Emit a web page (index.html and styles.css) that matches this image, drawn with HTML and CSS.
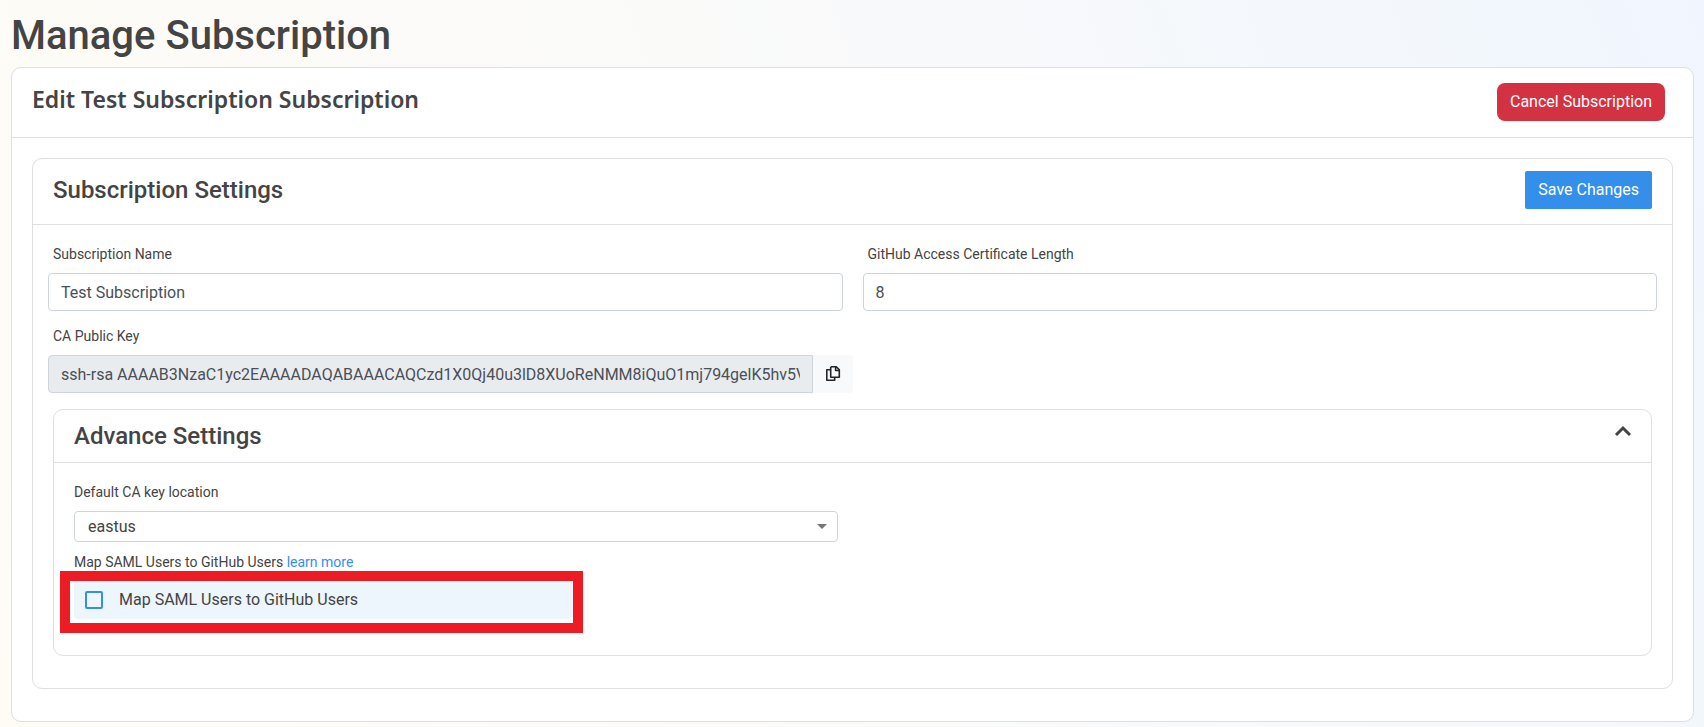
FILE: index.html
```html
<!DOCTYPE html>
<html lang="en">
<head>
<meta charset="utf-8">
<title>Manage Subscription</title>
<link rel="stylesheet" href="styles.css">
</head>
<body>
<main class="page">
  <h1 class="page-title">Manage Subscription</h1>
  <section class="card card-outer">
    <header class="card-header header-outer">
      <h2 class="card-title title-edit">Edit Test Subscription Subscription</h2>
      <button type="button" class="btn btn-danger">Cancel Subscription</button>
    </header>
    <form class="card card-settings">
      <header class="card-header header-settings">
        <h2 class="card-title">Subscription Settings</h2>
        <button type="button" class="btn btn-primary">Save Changes</button>
      </header>
      <div class="settings-body">
        <div class="field-row">
          <div class="field">
            <label class="label" for="sub-name">Subscription Name</label>
            <input class="control" id="sub-name" type="text" value="Test Subscription">
          </div>
          <div class="field">
            <label class="label" for="cert-length">GitHub Access Certificate Length</label>
            <input class="control" id="cert-length" type="text" value="8">
          </div>
        </div>
        <div class="field field-key">
          <label class="label" for="ca-key">CA Public Key</label>
          <div class="input-group">
            <input class="control control-readonly" id="ca-key" type="text" readonly value="ssh-rsa AAAAB3NzaC1yc2EAAAADAQABAAACAQCzd1X0Qj40u3lD8XUoReNMM8iQuO1mj794gelK5hv5VxQ2mT7">
            <button type="button" class="copy-btn" aria-label="Copy CA public key">
              <svg class="copy-icon" viewBox="0 0 16 18" aria-hidden="true">
                <path d="M6.5 1.8h4.8l3 3v7.4h-8.6v-9.6z M10.6 1.8v3.7h3.7 M5.7 4.8h-3.9v10.4h7.9v-3" fill="none" stroke="currentColor" stroke-width="1.6" stroke-linejoin="round"/>
              </svg>
            </button>
          </div>
        </div>
        <section class="card card-advance">
          <header class="card-header header-advance">
            <h2 class="card-title">Advance Settings</h2>
            <button type="button" class="collapse-btn" aria-label="Collapse advance settings">
              <svg class="chevron" viewBox="0 0 18 12" aria-hidden="true">
                <path d="M2 10l7-7 7 7" fill="none" stroke="currentColor" stroke-width="3"/>
              </svg>
            </button>
          </header>
          <div class="advance-body">
            <div class="location">
              <label class="label label-flush" for="location">Default CA key location</label>
              <div class="select-wrap">
                <select class="select" id="location"><option>eastus</option></select>
              </div>
            </div>
            <p class="map-note">Map SAML Users to GitHub Users <a class="link" href="#learn">learn more</a></p>
            <div class="map-option">
              <label class="check-label"><input class="check" type="checkbox">Map SAML Users to GitHub Users</label>
            </div>
          </div>
        </section>
      </div>
    </form>
  </section>
</main>
</body>
</html>
```
FILE: styles.css
```css
* { box-sizing: border-box; }

body {
  margin: 0;
  min-height: 100vh;
  background: linear-gradient(70deg, #fefcf5 0%, #fafafa 50%, #f2f7fd 90%, #f0f5ff 100%);
  color: #444;
  font: 400 16px/24px Roboto, sans-serif;
}

h1, h2, p { margin: 0; }
button, input, select { font: inherit; color: inherit; }

.page { padding: 12px 10px 4px 11px; }
.page-title { font-size: 40px; line-height: 48px; font-weight: 500; margin-bottom: 7px; }

.card { background: #fff; border: 1px solid #dedfe0; border-radius: 10px; }
.card-outer { padding-bottom: 32px; }
.card-header {
  display: flex;
  justify-content: space-between;
  align-items: flex-start;
  border-bottom: 1px solid #dedfe0;
  padding: 0 20px;
}
.card-title { font-size: 24px; line-height: 32px; font-weight: 500; }
.title-edit { font-family: "Noto Sans", sans-serif; font-size: 23px; font-weight: 600; }

.header-outer { padding: 15px 28px 16px 20px; }
.header-settings { padding: 12px 20px 15px; }
.header-settings .card-title { margin-top: 3px; }
.header-advance { padding: 10px 19px 10px 20px; }

.btn { border: 0; height: 38px; padding: 0 13px; color: #fff; cursor: pointer; }
.btn-danger { background: #d33242; border-radius: 8px; }
.btn-primary { background: #348feb; border-radius: 2px; }

.card-settings { margin: 20px 20px 0; padding-bottom: 32px; }
.settings-body { padding: 19px 15px 0; }
.field-row { display: grid; grid-template-columns: 1fr 1fr; gap: 20px; }
.label { display: block; padding-left: 5px; margin-bottom: 8px; font-size: 14px; line-height: 21px; }
.label-flush { padding-left: 0; }
.control {
  display: block;
  width: 100%;
  height: 38px;
  padding: 0 12px;
  border: 1px solid #ced4da;
  border-radius: 4px;
  background: #fff;
  color: #495057;
}
.field-key { width: 50%; margin-top: 15px; }
.input-group { display: flex; }
.control-readonly { flex: 1; min-width: 0; background: #e9ecef; border-radius: 4px 0 0 4px; }
.copy-btn {
  width: 40px;
  border: 0;
  border-radius: 0 4px 4px 0;
  background: #f8f9fa;
  color: #212529;
  padding: 0 12px;
}
.copy-icon { display: block; width: 16px; height: 18px; }

.card-advance { margin: 16px 5px 0; }
.collapse-btn { border: 0; background: none; padding: 5px 0 0; }
.chevron { display: block; width: 18px; height: 12px; }
.advance-body { padding: 19px 20px 36px; }
.location { width: calc(50% - 15px); }
.select-wrap { display: flex; align-items: center; position: relative; }
.select-wrap::after {
  content: "";
  position: absolute;
  right: 11px;
  border: 5px solid transparent;
  border-top-color: #757575;
  border-bottom: 0;
  pointer-events: none;
}
.select {
  appearance: none;
  width: 100%;
  height: 31px;
  padding: 0 13px;
  border: 1px solid #ced4da;
  border-radius: 4px;
  background: #fff;
}
.map-note { margin-top: 10px; font-size: 14px; line-height: 21px; }
.link { color: #348feb; text-decoration: none; }

.map-option { position: relative; width: calc(33.333% - 20px); margin-top: 8px; }
.map-option::after {
  content: "";
  position: absolute;
  inset: -10px -10px -14px -14px;
  border: 10px solid #ed1c24;
  pointer-events: none;
}
.check-label {
  display: flex;
  align-items: center;
  gap: 16px;
  height: 38px;
  padding-left: 11px;
  border-radius: 4px;
  background: #edf5fd;
}
.check {
  appearance: none;
  width: 18px;
  height: 18px;
  margin: 0;
  border: 2px solid #348feb;
  border-radius: 2px;
}
```
